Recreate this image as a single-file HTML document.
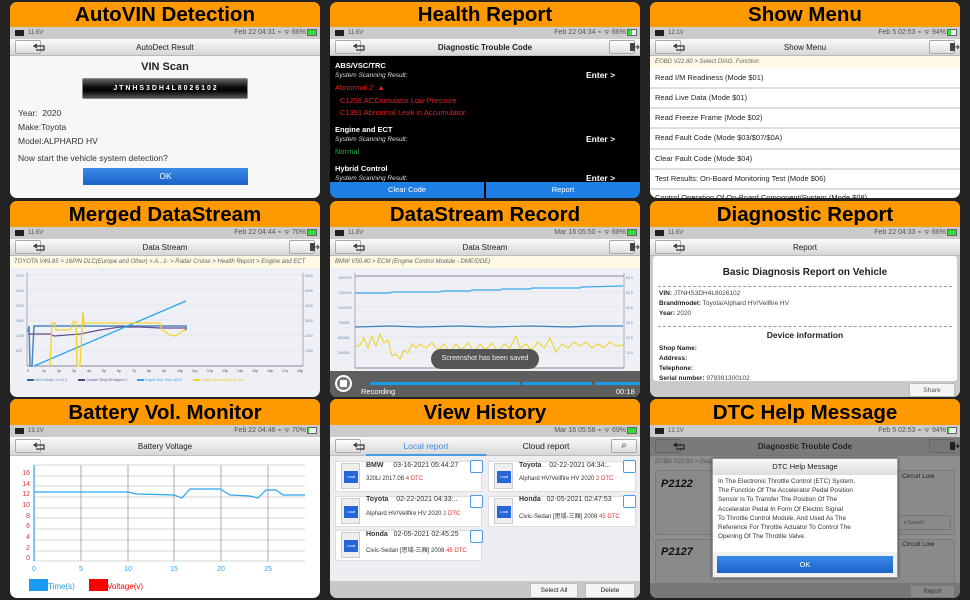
<!DOCTYPE html>
<html><head><meta charset="utf-8"><style>
*{margin:0;padding:0;box-sizing:border-box}
body{width:970px;height:600px;background:#232323;position:relative;overflow:hidden;font-family:"Liberation Sans","Noto Sans CJK SC",sans-serif;color:#222}
.p{position:absolute;width:310px;border-radius:7px;overflow:hidden;background:#f2f2f4}
.p div,.p span,.p svg{position:absolute}
.hd{left:0;top:0;width:310px;height:25px;background:#ff9900;color:#000;font-weight:bold;font-size:20.5px;text-align:center;line-height:26px}
.sb{left:0;top:25px;width:310px;height:12px;background:#cbcbcb;font-size:6px;color:#555;line-height:12px}
.tb{left:0;top:37px;width:310px;height:17px;background:linear-gradient(#fafafa,#d6d6d6);border-bottom:1px solid #bbb;font-size:8px;text-align:center;line-height:17px;color:#222}
.btn{top:1px;width:26px;height:14px;border:1px solid #aaa;border-radius:2px;background:linear-gradient(#fff,#ddd)}
.bc{left:0;top:54px;width:310px;height:12px;background:#fdf9e4;font-size:6.5px;font-style:italic;color:#666;line-height:12px;padding-left:5px;white-space:nowrap}
.t{white-space:nowrap}
</style></head><body>

<!-- status bar & title template via repeats -->

<!-- P1 -->
<div class="p" style="left:10px;top:2px;height:196px">
<div class="hd">AutoVIN Detection</div>
<div class="sb"><span style="left:5px;top:3px;width:9px;height:6px;background:#222"></span><span style="left:18px;top:0">11.6V</span><span style="right:14px;top:0;font-size:7px">Feb 22 04:31 ⌁ ᯤ 66%</span><span style="right:3px;top:2px;width:10px;height:7px;border:1px solid #666;background:#3d3"></span></div>
<div class="tb">AutoDect Result<div class="btn" style="left:5px"><svg width="24" height="12" viewBox="0 0 24 12"><path d="M9 3 L6 5 L9 7 M6 5 H16 V9 H8" fill="none" stroke="#333" stroke-width="1.2"/></svg></div></div>
<div style="left:0;top:54px;width:310px;height:142px;background:#f7f7f7"></div>
<div class="t" style="left:0;width:310px;text-align:center;top:59px;font-size:11px;font-weight:bold">VIN Scan</div>
<div style="left:72px;top:76px;width:166px;height:21px;background:linear-gradient(#666,#111 40%,#000 60%,#555);border:1px solid #888;border-radius:2px;display:flex;font-size:7px;font-weight:bold;color:#fff">
<span style="position:static;flex:1;text-align:center;line-height:19px;letter-spacing:0">J T N H S 3 D H 4 L 8 0 2 6 1 0 2</span></div>
<div class="t" style="left:8px;top:106px;font-size:8.5px;color:#333">Year:&nbsp; 2020</div>
<div class="t" style="left:8px;top:120px;font-size:8.5px;color:#333">Make:Toyota</div>
<div class="t" style="left:8px;top:134px;font-size:8.5px;color:#333">Model:ALPHARD HV</div>
<div class="t" style="left:8px;top:151px;font-size:8.5px;color:#333">Now start the vehicle system detection?</div>
<div style="left:73px;top:166px;width:165px;height:17px;background:linear-gradient(#3a8ae8,#1b62c9);color:#fff;font-size:8.5px;text-align:center;line-height:17px">OK</div>
</div>

<!-- P2 -->
<div class="p" style="left:330px;top:2px;height:196px;background:#000">
<div class="hd">Health Report</div>
<div class="sb"><span style="left:5px;top:3px;width:9px;height:6px;background:#222"></span><span style="left:18px;top:0">11.6V</span><span style="right:14px;top:0;font-size:7px">Feb 22 04:34 ⌁ ᯤ 66%</span><span style="right:3px;top:2px;width:10px;height:7px;border:1px solid #666;background:linear-gradient(90deg,#3d3 50%,#eee 50%)"></span></div>
<div class="tb" style="font-weight:bold">Diagnostic Trouble Code<div class="btn" style="left:5px"><svg width="24" height="12" viewBox="0 0 24 12"><path d="M9 3 L6 5 L9 7 M6 5 H16 V9 H8" fill="none" stroke="#333" stroke-width="1.2"/></svg></div><div class="btn" style="right:5px"><svg width="24" height="12"><rect x="8" y="2" width="5" height="8" fill="#444"/><path d="M13 6 H17 M15 4 L17 6 L15 8" stroke="#444" fill="none"/></svg></div></div>
<div class="t" style="left:5px;top:59px;font-size:7.5px;font-weight:bold;color:#fff">ABS/VSC/TRC</div>
<div class="t" style="left:5px;top:70px;font-size:6.5px;font-style:italic;color:#ddd">System Scanning Result:</div>
<div class="t" style="left:256px;top:68px;font-size:8.5px;font-weight:bold;color:#fff">Enter &gt;</div>
<div class="t" style="left:5px;top:81px;font-size:7.5px;color:#e52020">Abnormal 2 &nbsp;▲</div>
<div class="t" style="left:10px;top:94px;font-size:7.5px;color:#e52020">C1256 ACCumulator Low Pressure</div>
<div class="t" style="left:10px;top:106px;font-size:7.5px;color:#e52020">C1391 Abnormal Leak in Accumulator</div>
<div class="t" style="left:5px;top:123px;font-size:7.5px;font-weight:bold;color:#fff">Engine and ECT</div>
<div class="t" style="left:5px;top:134px;font-size:6.5px;font-style:italic;color:#ddd">System Scanning Result:</div>
<div class="t" style="left:256px;top:132px;font-size:8.5px;font-weight:bold;color:#fff">Enter &gt;</div>
<div class="t" style="left:5px;top:145px;font-size:7.5px;color:#1ab04a">Normal</div>
<div class="t" style="left:5px;top:162px;font-size:7.5px;font-weight:bold;color:#fff">Hybrid Control</div>
<div class="t" style="left:5px;top:173px;font-size:6.5px;font-style:italic;color:#ddd">System Scanning Result:</div>
<div class="t" style="left:256px;top:171px;font-size:8.5px;font-weight:bold;color:#fff">Enter &gt;</div>
<div style="left:0;top:180px;width:154px;height:16px;background:#1d7fe6;color:#fff;font-size:7.5px;text-align:center;line-height:16px">Clear Code</div>
<div style="left:156px;top:180px;width:154px;height:16px;background:#1d7fe6;color:#fff;font-size:7.5px;text-align:center;line-height:16px">Report</div>
</div>

<!-- P3 -->
<div class="p" style="left:650px;top:2px;height:196px;background:#fff">
<div class="hd">Show Menu</div>
<div class="sb"><span style="left:5px;top:3px;width:9px;height:6px;background:#222"></span><span style="left:18px;top:0">12.1V</span><span style="right:14px;top:0;font-size:7px">Feb 5 02:53 ⌁ ᯤ 94%</span><span style="right:3px;top:2px;width:10px;height:7px;border:1px solid #666;background:linear-gradient(90deg,#3d3 40%,#eee 40%)"></span></div>
<div class="tb">Show Menu<div class="btn" style="left:5px"><svg width="24" height="12" viewBox="0 0 24 12"><path d="M9 3 L6 5 L9 7 M6 5 H16 V9 H8" fill="none" stroke="#333" stroke-width="1.2"/></svg></div><div class="btn" style="right:5px"><svg width="24" height="12"><rect x="8" y="2" width="5" height="8" fill="#444"/><path d="M13 6 H17 M15 4 L17 6 L15 8" stroke="#444" fill="none"/></svg></div></div>
<div class="bc" style="font-size:6px">EOBD V22.80 &gt; Select DIAG. Function</div>
<div style="left:0;top:85px;width:310px;height:2px;background:#ddd"></div>
<div style="left:0;top:105px;width:310px;height:2px;background:#ddd"></div>
<div style="left:0;top:125px;width:310px;height:2px;background:#ddd"></div>
<div style="left:0;top:146px;width:310px;height:2px;background:#ddd"></div>
<div style="left:0;top:166px;width:310px;height:2px;background:#ddd"></div>
<div style="left:0;top:186px;width:310px;height:2px;background:#ddd"></div>
<div class="t" style="left:5px;top:71px;font-size:7.5px">Read I/M Readiness (Mode $01)</div>
<div class="t" style="left:5px;top:91px;font-size:7.5px">Read Live Data (Mode $01)</div>
<div class="t" style="left:5px;top:111px;font-size:7.5px">Read Freeze Frame (Mode $02)</div>
<div class="t" style="left:5px;top:131px;font-size:7.5px">Read Fault Code (Mode $03/$07/$0A)</div>
<div class="t" style="left:5px;top:152px;font-size:7.5px">Clear Fault Code (Mode $04)</div>
<div class="t" style="left:5px;top:172px;font-size:7.5px">Test Results: On-Board Monitoring Test (Mode $06)</div>
<div class="t" style="left:5px;top:191px;font-size:7.5px">Control Operation Of On-Board Component/System (Mode $08)</div>
</div>

<!-- P4 -->
<div class="p" style="left:10px;top:201px;height:196px;background:#eef0f5">
<div class="hd" style="height:26px;line-height:27px">Merged DataStream</div>
<div class="sb" style="top:26px"><span style="left:5px;top:3px;width:9px;height:6px;background:#222"></span><span style="left:18px;top:0">11.6V</span><span style="right:14px;top:0;font-size:7px">Feb 22 04:44 ⌁ ᯤ 70%</span><span style="right:3px;top:2px;width:10px;height:7px;border:1px solid #666;background:#3d3"></span></div>
<div class="tb" style="top:38px">Data Stream<div class="btn" style="left:5px"><svg width="24" height="12" viewBox="0 0 24 12"><path d="M9 3 L6 5 L9 7 M6 5 H16 V9 H8" fill="none" stroke="#333" stroke-width="1.2"/></svg></div><div class="btn" style="right:5px"><svg width="24" height="12"><rect x="8" y="2" width="5" height="8" fill="#444"/><path d="M13 6 H17 M15 4 L17 6 L15 8" stroke="#444" fill="none"/></svg></div></div>
<div class="bc" style="top:55px;font-size:6px;padding-left:4px">TOYOTA V49.85 &gt; 16PIN DLC(Europe and Other) &gt; A...1- &gt; Radar Cruise &gt; Health Report &gt; Engine and ECT</div>
<svg style="left:0;top:67px" width="310" height="129">
<g stroke="#d8dbe3" stroke-width="0.6">
<line x1="17" y1="7" x2="293" y2="7"/><line x1="17" y1="22" x2="293" y2="22"/><line x1="17" y1="37" x2="293" y2="37"/><line x1="17" y1="52" x2="293" y2="52"/><line x1="17" y1="67" x2="293" y2="67"/><line x1="17" y1="82" x2="293" y2="82"/>
</g>
<line x1="17" y1="5" x2="17" y2="98" stroke="#aab" />
<line x1="293" y1="5" x2="293" y2="98" stroke="#aab"/>
<line x1="17" y1="98" x2="293" y2="98" stroke="#889"/>
<polyline points="18,64 19,58 20,98 22,98 24,58 176,58 176,62" fill="none" stroke="#4a86c0" stroke-width="1.5"/>
<polyline points="18,66 40,66 44,68 70,66 90,62 110,59 130,59 150,60 176,60" fill="none" stroke="#6a4e8a" stroke-width="1.2"/>
<polyline points="24,98 176,33" fill="none" stroke="#2aa4f0" stroke-width="1.3"/>
<polyline points="40,98 42,55 45,55 46,62 60,62 63,54 66,54 67,98 70,98 73,44 74,56 76,55 150,55 152,62 160,67 165,68 170,65 174,62 176,63" fill="none" stroke="#f2d22a" stroke-width="1.3"/>
<g font-size="3.5" fill="#6a8ab0"><text x="6" y="9">3750</text><text x="6" y="24">3150</text><text x="6" y="39">2520</text><text x="6" y="54">1890</text><text x="6" y="69">1260</text><text x="6" y="84">630</text><text x="295" y="9">6000</text><text x="295" y="24">5000</text><text x="295" y="39">4000</text><text x="295" y="54">3000</text><text x="295" y="69">2000</text><text x="295" y="84">1000</text></g>
<g font-size="3.5" fill="#445"><text x="17" y="104">0</text><text x="32" y="104">1p</text><text x="47" y="104">2p</text><text x="62" y="104">3p</text><text x="77" y="104">4p</text><text x="92" y="104">5p</text><text x="107" y="104">6p</text><text x="122" y="104">7p</text><text x="137" y="104">8p</text><text x="152" y="104">9p</text><text x="167" y="104">10p</text><text x="182" y="104">11p</text><text x="197" y="104">12p</text><text x="212" y="104">13p</text><text x="227" y="104">14p</text><text x="242" y="104">15p</text><text x="257" y="104">16p</text><text x="272" y="104">17p</text><text x="287" y="104">18p</text></g>
<rect x="17" y="111" width="7" height="2" fill="#2a6a9a"/><text x="25" y="113" font-size="3.5" fill="#6a8ab0">rBM Voltage 14.40 V</text>
<rect x="68" y="111" width="7" height="2" fill="#5a3e7a"/><text x="76" y="113" font-size="3.5" fill="#6a4e8a">Coolant Temp 83 degree C</text>
<rect x="127" y="111" width="7" height="2" fill="#2aa4f0"/><text x="135" y="113" font-size="3.5" fill="#2aa4f0">Engine Run Time 429 S</text>
<rect x="183" y="111" width="7" height="2" fill="#f2d22a"/><text x="191" y="113" font-size="3.5" fill="#e8c820">Engine Speed 1226.50 rpm</text>
</svg>
</div>

<!-- P5 -->
<div class="p" style="left:330px;top:201px;height:196px;background:#eef0f5">
<div class="hd" style="height:26px;line-height:27px">DataStream Record</div>
<div class="sb" style="top:26px"><span style="left:5px;top:3px;width:9px;height:6px;background:#222"></span><span style="left:18px;top:0">11.8V</span><span style="right:14px;top:0;font-size:7px">Mar 16 05:50 ⌁ ᯤ 68%</span><span style="right:3px;top:2px;width:10px;height:7px;border:1px solid #666;background:#3d3"></span></div>
<div class="tb" style="top:38px">Data Stream<div class="btn" style="left:5px"><svg width="24" height="12" viewBox="0 0 24 12"><path d="M9 3 L6 5 L9 7 M6 5 H16 V9 H8" fill="none" stroke="#333" stroke-width="1.2"/></svg></div><div class="btn" style="right:5px"><svg width="24" height="12"><rect x="8" y="2" width="5" height="8" fill="#444"/><path d="M13 6 H17 M15 4 L17 6 L15 8" stroke="#444" fill="none"/></svg></div></div>
<div class="bc" style="top:55px;font-size:6px;padding-left:5px">BMW V50.40 &gt; ECM (Engine Control Module - DME/DDE)</div>
<svg style="left:0;top:67px" width="310" height="110">
<g stroke="#d8dbe3" stroke-width="0.6"><line x1="25" y1="9" x2="294" y2="9"/><line x1="25" y1="24" x2="294" y2="24"/><line x1="25" y1="39" x2="294" y2="39"/><line x1="25" y1="54" x2="294" y2="54"/><line x1="25" y1="69" x2="294" y2="69"/><line x1="25" y1="84" x2="294" y2="84"/></g>
<line x1="25" y1="8" x2="294" y2="8" stroke="#b0a8c0" stroke-width="1.5"/>
<line x1="25" y1="5" x2="25" y2="100" stroke="#aab"/><line x1="294" y1="5" x2="294" y2="100" stroke="#aab"/><line x1="25" y1="100" x2="294" y2="100" stroke="#889"/>
<polyline points="25,25 60,25 62,24 110,24 112,23 140,23 142,22 170,22 172,21 200,21 202,20 250,20 252,19 293,18" fill="none" stroke="#3aaaf0" stroke-width="1.3"/>
<polyline points="25,59 60,58 90,59 130,58 160,59 200,58 240,59 260,58 293,58" fill="none" stroke="#3a80b8" stroke-width="1.2"/>
<polyline points="25,79 30,77 34,70 38,80 42,68 46,78 50,66 54,75 58,72 62,88 66,86 70,91 74,82 78,85 82,76 86,80 90,76 96,80 102,75 108,82 114,76 120,84 126,76 132,82 138,75 144,84 150,76 156,82 162,75 168,85 174,76 180,80 186,68 190,80 196,76 202,82 208,74 214,80 220,70 226,84 232,76 238,80 244,74 250,78 256,74 262,80 268,76 274,80 280,74 286,78 293,77" fill="none" stroke="#f0d020" stroke-width="1"/>
<g font-size="3.5" fill="#6a8ab0"><text x="8" y="11">1500000</text><text x="8" y="26">1250000</text><text x="8" y="41">1000000</text><text x="8" y="56">750000</text><text x="8" y="71">500000</text><text x="8" y="86">250000</text><text x="296" y="11">62.5</text><text x="296" y="26">52.5</text><text x="296" y="41">42.5</text><text x="296" y="56">32.5</text><text x="296" y="71">22.5</text><text x="296" y="86">12.5</text></g>
</svg>
<div style="left:101px;top:148px;width:108px;height:20px;border-radius:10px;background:#555;color:#eee;font-size:7px;text-align:center;line-height:20px">Screenshot has been saved</div>
<div style="left:0;top:170px;width:310px;height:26px;background:#5e5e5e"></div>
<div style="left:40px;top:181px;width:150px;height:3px;background:#1a9ae8"></div>
<div style="left:192px;top:181px;width:70px;height:3px;background:#1a9ae8"></div>
<div style="left:265px;top:181px;width:45px;height:3px;background:#1a9ae8"></div>
<div style="left:5px;top:174px;width:17px;height:17px;border-radius:50%;border:2px solid #fff;background:#777"><span style="left:3px;top:3px;width:7px;height:7px;background:#fff;border-radius:1px"></span></div>
<div class="t" style="left:31px;top:186px;font-size:7.5px;color:#fff">Recording</div>
<div class="t" style="left:286px;top:186px;font-size:7.5px;color:#fff">00:18</div>
</div>

<!-- P6 -->
<div class="p" style="left:650px;top:201px;height:196px;background:#cacaca">
<div class="hd" style="height:26px;line-height:27px">Diagnostic Report</div>
<div class="sb" style="top:26px"><span style="left:5px;top:3px;width:9px;height:6px;background:#222"></span><span style="left:18px;top:0">11.6V</span><span style="right:14px;top:0;font-size:7px">Feb 22 04:33 ⌁ ᯤ 66%</span><span style="right:3px;top:2px;width:10px;height:7px;border:1px solid #666;background:#3d3"></span></div>
<div class="tb" style="top:38px">Report<div class="btn" style="left:5px"><svg width="24" height="12" viewBox="0 0 24 12"><path d="M9 3 L6 5 L9 7 M6 5 H16 V9 H8" fill="none" stroke="#333" stroke-width="1.2"/></svg></div></div>
<div style="left:3px;top:55px;width:304px;height:125px;background:#fff;border-radius:3px"></div>
<div class="t" style="left:0;width:310px;text-align:center;top:66px;font-size:10px;font-weight:bold">Basic Diagnosis Report on Vehicle</div>
<div style="left:8px;top:85px;width:294px;border-top:1px dashed #999"></div>
<div class="t" style="left:9px;top:89px;font-size:6.5px;color:#444"><b style="color:#222">VIN:</b> JTNHS3DH4L8026102</div>
<div class="t" style="left:9px;top:99px;font-size:6.5px;color:#444"><b style="color:#222">Brand/model:</b> Toyota/Alphard HV/Vellfire HV</div>
<div class="t" style="left:9px;top:109px;font-size:6.5px;color:#444"><b style="color:#222">Year:</b> 2020</div>
<div style="left:8px;top:125px;width:294px;border-top:1px dashed #999"></div>
<div class="t" style="left:0;width:310px;text-align:center;top:129px;font-size:8.5px;font-weight:bold">Device information</div>
<div class="t" style="left:9px;top:144px;font-size:6.5px;font-weight:bold">Shop Name:</div>
<div class="t" style="left:9px;top:154px;font-size:6.5px;font-weight:bold">Address:</div>
<div class="t" style="left:9px;top:164px;font-size:6.5px;font-weight:bold">Telephone:</div>
<div class="t" style="left:9px;top:174px;font-size:6.5px;font-weight:bold">Serial number: <span style="position:static;font-weight:normal;color:#444">979391300102</span></div>
<div style="left:0;top:180px;width:310px;height:16px;background:#cacaca"></div>
<div style="left:259px;top:182px;width:46px;height:14px;background:#f5f5f5;border:1px solid #bbb;font-size:6.5px;text-align:center;line-height:13px;color:#555">Share</div>
</div>

<!-- P7 -->
<div class="p" style="left:10px;top:399px;height:199px;background:#fff">
<div class="hd" style="height:26px;line-height:27px">Battery Vol. Monitor</div>
<div class="sb" style="top:26px"><span style="left:5px;top:3px;width:9px;height:6px;background:#222"></span><span style="left:18px;top:0">13.1V</span><span style="right:14px;top:0;font-size:7px">Feb 22 04:46 ⌁ ᯤ 70%</span><span style="right:3px;top:2px;width:10px;height:7px;border:1px solid #666;background:linear-gradient(90deg,#3d3 15%,#eee 15%)"></span></div>
<div class="tb" style="top:38px;height:19px;line-height:19px">Battery Voltage<div class="btn" style="left:5px;top:2px"><svg width="24" height="12" viewBox="0 0 24 12"><path d="M9 3 L6 5 L9 7 M6 5 H16 V9 H8" fill="none" stroke="#333" stroke-width="1.2"/></svg></div></div>
<svg style="left:0;top:58px" width="310" height="141">
<g stroke="#c8c8c8" stroke-width="0.8">
<line x1="24" y1="8" x2="295" y2="8"/><line x1="24" y1="19" x2="295" y2="19"/><line x1="24" y1="29" x2="295" y2="29"/><line x1="24" y1="40" x2="295" y2="40"/><line x1="24" y1="51" x2="295" y2="51"/><line x1="24" y1="61" x2="295" y2="61"/><line x1="24" y1="72" x2="295" y2="72"/><line x1="24" y1="83" x2="295" y2="83"/><line x1="24" y1="94" x2="295" y2="94"/><line x1="24" y1="104" x2="295" y2="104"/></g>
<g stroke="#999" stroke-width="0.8"><line x1="71" y1="8" x2="71" y2="104"/><line x1="118" y1="8" x2="118" y2="104"/><line x1="164" y1="8" x2="164" y2="104"/><line x1="211" y1="8" x2="211" y2="104"/><line x1="258" y1="8" x2="258" y2="104"/></g>
<line x1="24" y1="8" x2="24" y2="104" stroke="#2aa4f0" stroke-width="1.2"/>
<polyline points="24,35 70,35 118,35 127,37 164,38 172,41 180,32 210,32 220,38 240,39 248,41 256,33 266,33 273,38 295,38" fill="none" stroke="#2aa4f0" stroke-width="1.2"/>
<g font-size="7" fill="#e53030" text-anchor="end"><text x="20" y="18">16</text><text x="20" y="29">14</text><text x="20" y="39">12</text><text x="20" y="50">10</text><text x="20" y="61">8</text><text x="20" y="71">6</text><text x="20" y="82">4</text><text x="20" y="93">2</text><text x="20" y="103">0</text></g>
<g font-size="7" fill="#2aa4f0" text-anchor="middle"><text x="24" y="114">0</text><text x="71" y="114">5</text><text x="118" y="114">10</text><text x="164" y="114">15</text><text x="211" y="114">20</text><text x="258" y="114">25</text></g>
<rect x="19" y="122" width="19" height="12" fill="#1a9af0"/><text x="38" y="132" font-size="8" fill="#1a9af0">Time(s)</text>
<rect x="79" y="122" width="19" height="12" fill="#f00"/><text x="97" y="132" font-size="8" fill="#f00">Voltage(v)</text>
</svg>
</div>

<!-- P8 -->
<div class="p" style="left:330px;top:399px;height:199px;background:#eeeef2">
<div class="hd" style="height:26px;line-height:27px">View History</div>
<div class="sb" style="top:26px"><span style="right:14px;top:0;font-size:7px">Mar 16 05:58 ⌁ ᯤ 69%</span><span style="right:3px;top:2px;width:10px;height:7px;border:1px solid #666;background:#3d3"></span></div>
<div class="tb" style="top:38px;height:19px;line-height:19px;font-size:8.5px"><div class="btn" style="left:5px;top:2px"><svg width="24" height="12" viewBox="0 0 24 12"><path d="M9 3 L6 5 L9 7 M6 5 H16 V9 H8" fill="none" stroke="#333" stroke-width="1.2"/></svg></div>
<span style="left:36px;width:120px;top:0;text-align:center;color:#3a8ae0">Local report</span><span style="left:36px;width:120px;top:17px;height:2px;background:#4a9ae8"></span>
<span style="left:156px;width:120px;top:0;text-align:center">Cloud report</span>
<div class="btn" style="right:3px;top:2px;font-size:10px;line-height:11px">⌕</div></div>
<div style="left:5px;top:62px;width:147px;height:31px;background:#fff;border:1px solid #ddd"></div>
<div style="left:158px;top:62px;width:148px;height:31px;background:#fff;border:1px solid #ddd"></div>
<div style="left:5px;top:97px;width:147px;height:31px;background:#fff;border:1px solid #ddd"></div>
<div style="left:158px;top:97px;width:148px;height:31px;background:#fff;border:1px solid #ddd"></div>
<div style="left:5px;top:131px;width:147px;height:31px;background:#fff;border:1px solid #ddd"></div>
<!-- icons -->
<div style="left:11px;top:64px;width:19px;height:26px;background:#eee;border:1px solid #ccc"><span style="left:2px;top:7px;width:14px;height:12px;background:#2566d8;color:#fff;font-size:3.5px;text-align:center;line-height:12px">Local</span></div>
<div style="left:164px;top:64px;width:19px;height:26px;background:#eee;border:1px solid #ccc"><span style="left:2px;top:7px;width:14px;height:12px;background:#2566d8;color:#fff;font-size:3.5px;text-align:center;line-height:12px">Local</span></div>
<div style="left:11px;top:99px;width:19px;height:26px;background:#eee;border:1px solid #ccc"><span style="left:2px;top:7px;width:14px;height:12px;background:#2566d8;color:#fff;font-size:3.5px;text-align:center;line-height:12px">Local</span></div>
<div style="left:164px;top:99px;width:19px;height:26px;background:#eee;border:1px solid #ccc"><span style="left:2px;top:7px;width:14px;height:12px;background:#2566d8;color:#fff;font-size:3.5px;text-align:center;line-height:12px">Local</span></div>
<div style="left:11px;top:133px;width:19px;height:26px;background:#eee;border:1px solid #ccc"><span style="left:2px;top:7px;width:14px;height:12px;background:#2566d8;color:#fff;font-size:3.5px;text-align:center;line-height:12px">Local</span></div>
<div style="left:140px;top:61px;width:13px;height:13px;border:1px solid #4a9ae8;background:#fff;border-radius:2px"></div>
<div style="left:293px;top:61px;width:13px;height:13px;border:1px solid #4a9ae8;background:#fff;border-radius:2px"></div>
<div style="left:140px;top:96px;width:13px;height:13px;border:1px solid #4a9ae8;background:#fff;border-radius:2px"></div>
<div style="left:293px;top:96px;width:13px;height:13px;border:1px solid #4a9ae8;background:#fff;border-radius:2px"></div>
<div style="left:140px;top:131px;width:13px;height:13px;border:1px solid #4a9ae8;background:#fff;border-radius:2px"></div>
<div class="t" style="left:36px;top:63px;font-size:7px;color:#333"><b>BMW</b>&nbsp;&nbsp;&nbsp;&nbsp; 03-16-2021 05:44:27</div>
<div class="t" style="left:36px;top:77px;font-size:6px;color:#333">320Li 2017.08 <span style="position:static;color:#e53030">4 DTC</span></div>
<div class="t" style="left:189px;top:63px;font-size:7px;color:#333"><b>Toyota</b>&nbsp;&nbsp;&nbsp; 02-22-2021 04:34:..</div>
<div class="t" style="left:189px;top:77px;font-size:6px;color:#333">Alphard HV/Vellfire HV 2020 <span style="position:static;color:#e53030">2 DTC</span></div>
<div class="t" style="left:36px;top:97px;font-size:7px;color:#333"><b>Toyota</b>&nbsp;&nbsp;&nbsp; 02-22-2021 04:33:..</div>
<div class="t" style="left:36px;top:112px;font-size:6px;color:#333">Alphard HV/Vellfire HV 2020 <span style="position:static;color:#e53030">2 DTC</span></div>
<div class="t" style="left:189px;top:97px;font-size:7px;color:#333"><b>Honda</b>&nbsp;&nbsp; 02-05-2021 02:47:53</div>
<div class="t" style="left:189px;top:112px;font-size:6px;color:#333">Civic-Sedan [思域-三厢] 2008 <span style="position:static;color:#e53030">45 DTC</span></div>
<div class="t" style="left:36px;top:132px;font-size:7px;color:#333"><b>Honda</b>&nbsp;&nbsp; 02-05-2021 02:45:25</div>
<div class="t" style="left:36px;top:146px;font-size:6px;color:#333">Civic-Sedan [思域-三厢] 2008 <span style="position:static;color:#e53030">45 DTC</span></div>
<div style="left:0;top:182px;width:310px;height:17px;background:#c8c8c8"></div>
<div style="left:200px;top:184px;width:48px;height:15px;background:#f5f5f5;border:1px solid #bbb;font-size:6.5px;text-align:center;line-height:14px">Select All</div>
<div style="left:255px;top:184px;width:50px;height:15px;background:#f5f5f5;border:1px solid #bbb;font-size:6.5px;text-align:center;line-height:14px">Delete</div>
</div>

<!-- P9 -->
<div class="p" style="left:650px;top:399px;height:199px;background:#8e8e8e">
<div class="hd" style="height:26px;line-height:27px">DTC Help Message</div>
<div class="sb" style="top:26px"><span style="left:5px;top:3px;width:9px;height:6px;background:#222"></span><span style="left:18px;top:0">12.1V</span><span style="right:14px;top:0;font-size:7px">Feb 5 02:53 ⌁ ᯤ 94%</span><span style="right:3px;top:2px;width:10px;height:7px;border:1px solid #666;background:linear-gradient(90deg,#3d3 15%,#eee 15%)"></span></div>
<div class="tb" style="top:38px;height:19px;line-height:19px;background:#7a7a7a;color:#222;font-weight:bold;border-bottom:0">Diagnostic Trouble Code<div class="btn" style="left:5px;top:2px;background:#777;border-color:#666"><svg width="24" height="12" viewBox="0 0 24 12"><path d="M9 3 L6 5 L9 7 M6 5 H16 V9 H8" fill="none" stroke="#222" stroke-width="1.2"/></svg></div><div class="btn" style="right:5px;top:2px;background:#777;border-color:#666"><svg width="24" height="12"><rect x="8" y="2" width="5" height="8" fill="#222"/><path d="M13 6 H17 M15 4 L17 6 L15 8" stroke="#222" fill="none"/></svg></div></div>
<div class="t" style="left:5px;top:60px;font-size:6px;font-style:italic;color:#555">EOBD V22.80 &gt; Diag</div>
<div style="left:5px;top:71px;width:300px;height:65px;background:#8a8a8a;border:1px solid #7a7a7a;border-radius:3px"></div>
<div style="left:5px;top:140px;width:300px;height:45px;background:#8a8a8a;border:1px solid #7a7a7a;border-radius:3px"></div>
<div class="t" style="left:11px;top:79px;font-size:11px;font-weight:bold;font-style:italic;color:#111">P2122</div>
<div class="t" style="left:11px;top:147px;font-size:11px;font-weight:bold;font-style:italic;color:#111">P2127</div>
<div class="t" style="left:252px;top:74px;font-size:6.5px;color:#222">Circuit Low</div>
<div class="t" style="left:252px;top:142px;font-size:6.5px;color:#222">Circuit Low</div>
<div style="left:245px;top:116px;width:56px;height:15px;border:1px solid #777;border-radius:2px;font-size:5px;color:#444;line-height:14px;padding-left:8px">e Search</div>
<div style="left:0;top:184px;width:310px;height:15px;background:#777"></div>
<div style="left:260px;top:186px;width:45px;height:13px;background:#8a8a8a;border:1px solid #777;font-size:6px;text-align:center;line-height:12px;color:#333">Report</div>
<div style="left:62px;top:59px;width:186px;height:120px;background:#fff;border:1px solid #999;box-shadow:0 0 3px #444"></div>
<div style="left:63px;top:60px;width:184px;height:16px;background:linear-gradient(#f8f8f8,#ddd);font-size:7.5px;text-align:center;line-height:16px;color:#222">DTC Help Message</div>
<div style="left:68px;top:78px;width:178px;font-size:6.4px;line-height:9.2px;color:#333">In The Electronic Throttle Control (ETC) System,<br>The Function Of The Accelerator Pedal Position<br>Sensor Is To Transfer The Position Of The<br>Accelerator Pedal In Form Of Electric Signal<br>To Throttle Control Module, And Used As The<br>Reference For Throttle Actuator To Control The<br>Opening Of The Throttle Valve.</div>
<div style="left:63px;top:153px;width:184px;height:25px;background:#f0f0f0"></div>
<div style="left:67px;top:157px;width:176px;height:17px;background:linear-gradient(#3a8ae8,#1b62c9);color:#fff;font-size:7.5px;text-align:center;line-height:17px">OK</div>
</div>

</body></html>
